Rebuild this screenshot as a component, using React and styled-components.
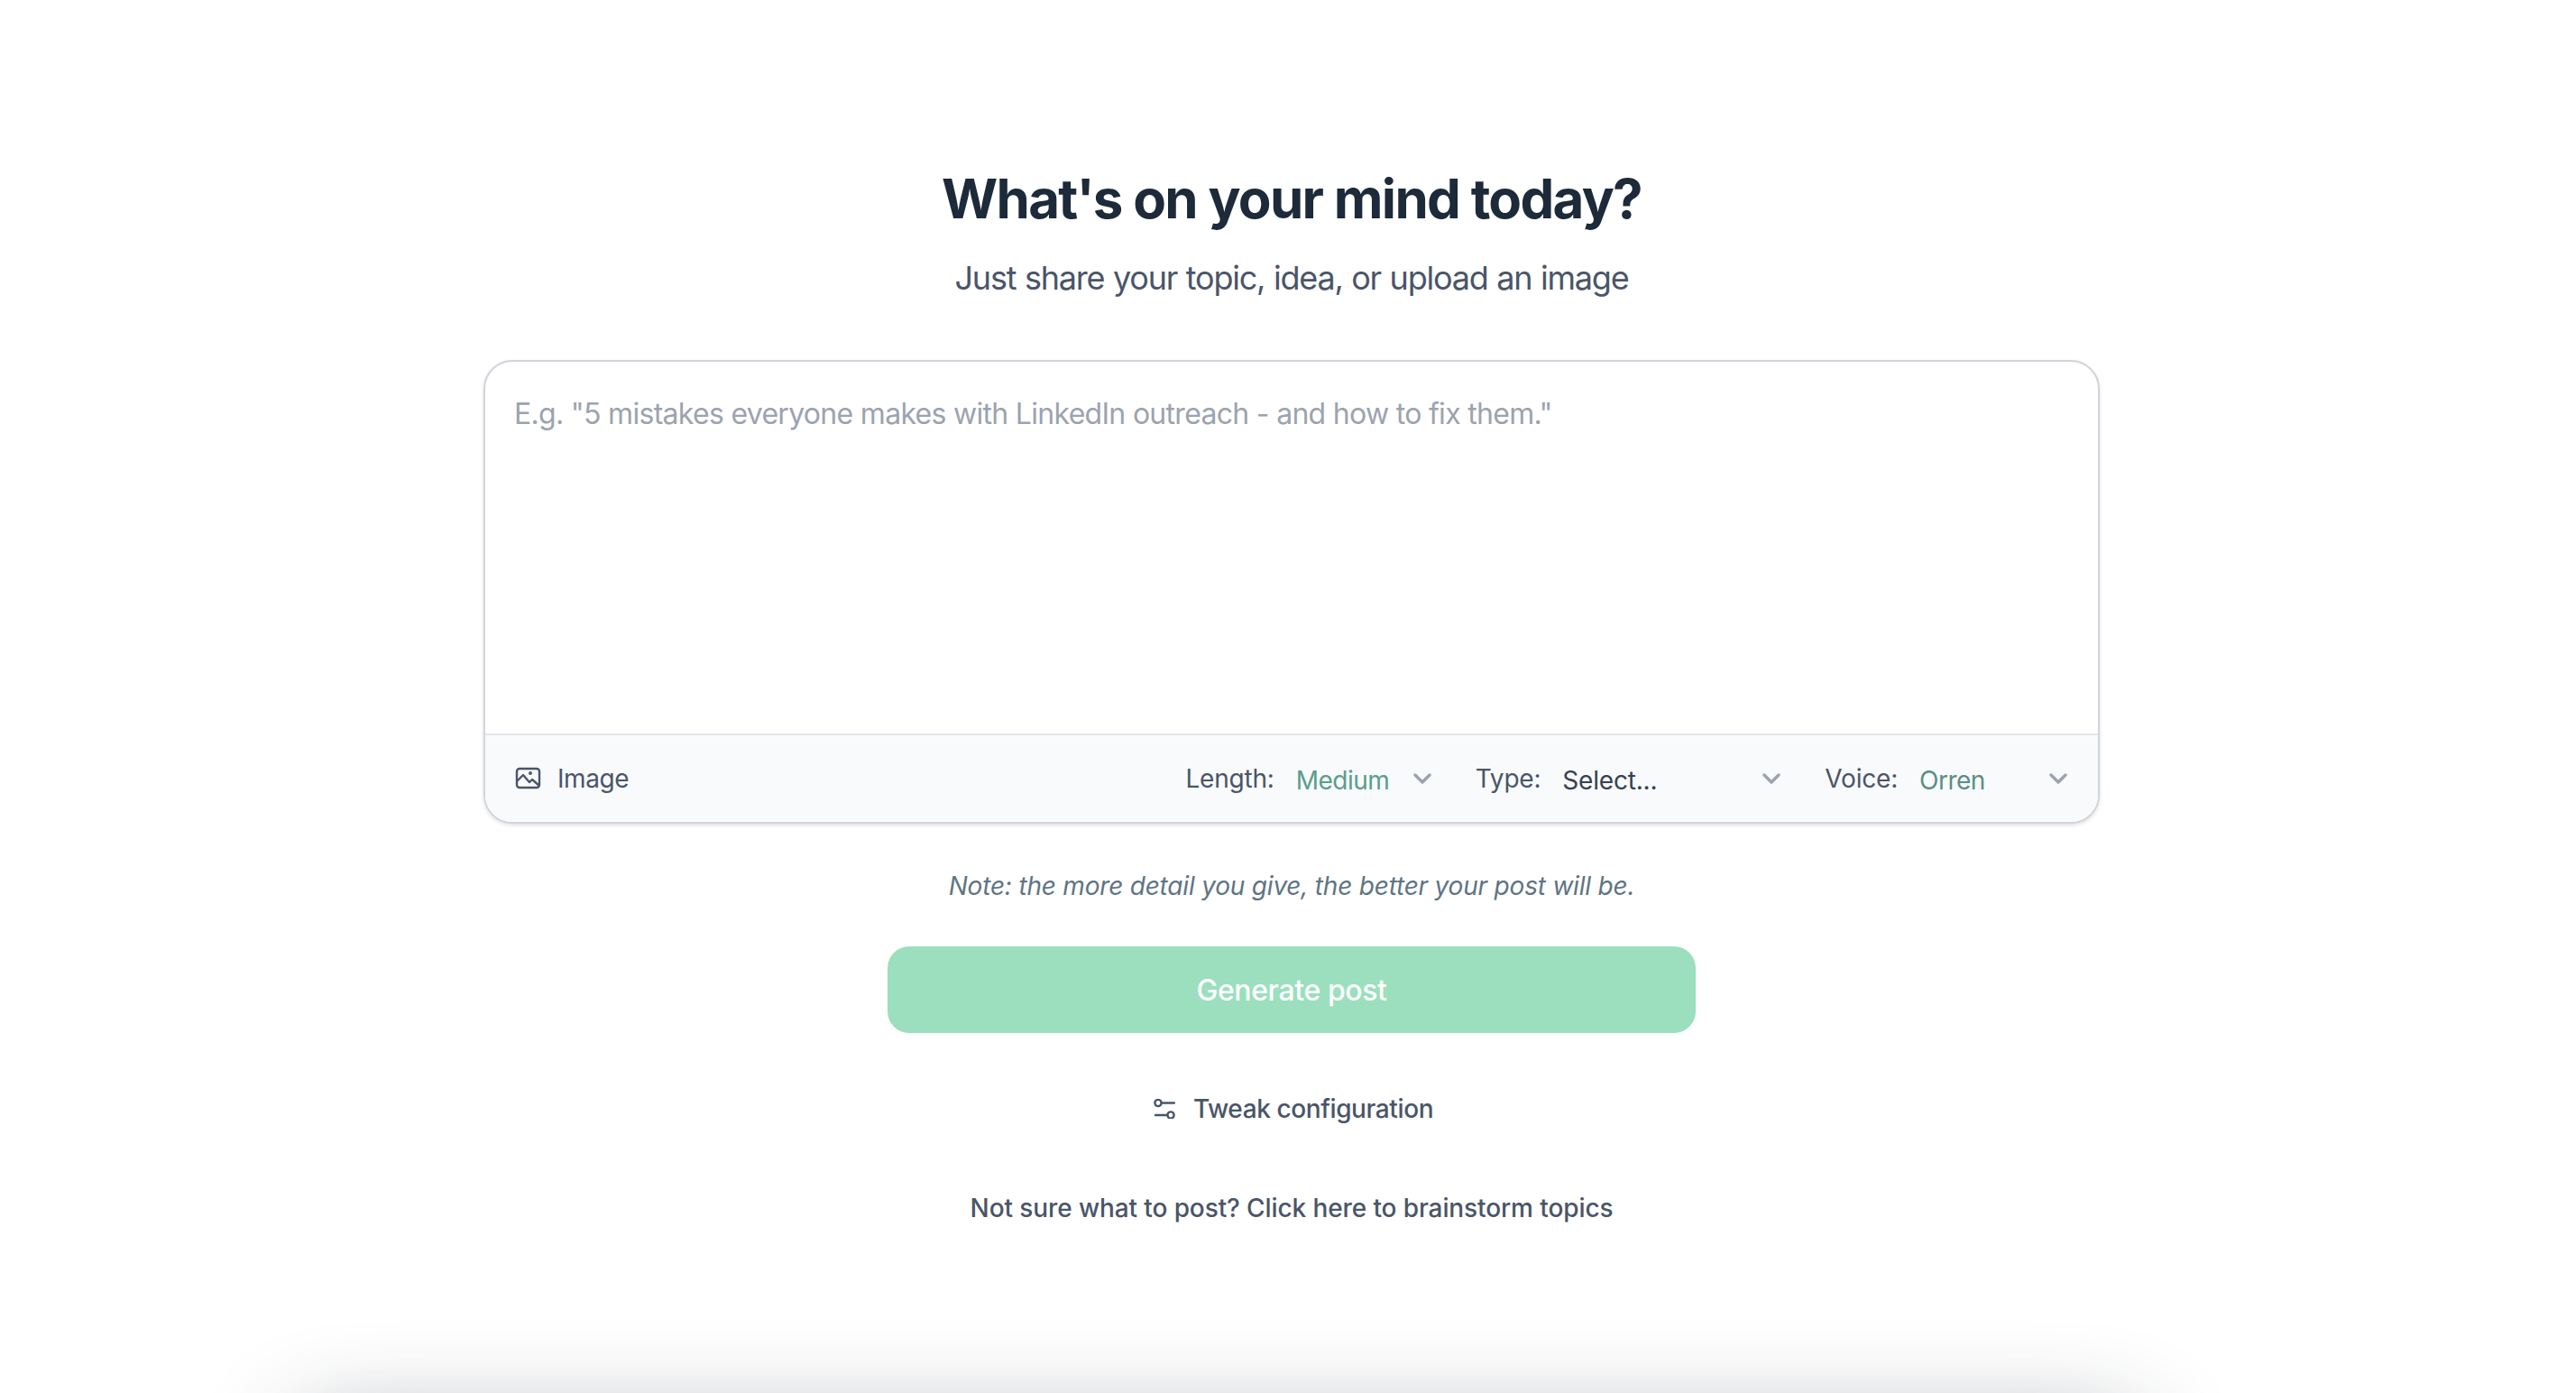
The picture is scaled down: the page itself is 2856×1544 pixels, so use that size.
import React from "react";
import styled, { createGlobalStyle } from "styled-components";

const GlobalStyle = createGlobalStyle`
  html, body {
    margin: 0;
    padding: 0;
    background: #ffffff;
    font-family: "Inter", "Liberation Sans", sans-serif;
  }
  * { box-sizing: border-box; }
`;

const Page = styled.main`
  height: 100vh;
  overflow: hidden;
  display: flex;
  flex-direction: column;
  align-items: center;
  padding: 184px 0 0 8px;
  background: #ffffff;
  & > * { flex: none; }
`;

const Title = styled.h1`
  margin: 0;
  font-size: 60px;
  line-height: 72px;
  font-weight: 700;
  letter-spacing: -1.7px;
  color: #1c2a39;
`;

const Subtitle = styled.p`
  margin: 24px 0 0;
  font-size: 36px;
  line-height: 56px;
  letter-spacing: -1.2px;
  word-spacing: 0.7px;
  color: #4a5568;
`;

const Composer = styled.section`
  width: 1792px;
  height: 514px;
  margin-top: 63px;
  display: flex;
  flex-direction: column;
  border: 2px solid #d1d5db;
  border-radius: 32px;
  background: #ffffff;
  box-shadow: 0 2px 4px rgba(0, 0, 0, 0.12);
  overflow: hidden;
`;

const Prompt = styled.textarea`
  flex: 1;
  width: 100%;
  padding: 34px 32px 32px;
  border: 0;
  outline: 0;
  resize: none;
  font: 400 32px/48px "Inter", sans-serif;
  letter-spacing: -0.7px;
  color: #1f2937;
  background: transparent;
  &::placeholder {
    color: #9ca3af;
    opacity: 1;
  }
`;

const Toolbar = styled.div`
  height: 98px;
  display: flex;
  align-items: center;
  padding: 0 34px 0 32px;
  background: #f8fafc;
  border-top: 2px solid #e5e7eb;
`;

const ImageButton = styled.button`
  display: flex;
  align-items: center;
  gap: 18px;
  padding: 0;
  border: 0;
  background: none;
  font: 400 28px/40px "Inter", sans-serif;
  letter-spacing: -0.4px;
  color: #4a5568;
  margin-right: auto;
`;

const Picker = styled.div`
  display: flex;
  align-items: center;
  margin-left: ${(p) => p.$gap}px;
`;

const PickerLabel = styled.span`
  font-size: 28px;
  line-height: 40px;
  letter-spacing: -0.2px;
  color: #4a5568;
`;

const PickerValue = styled.span`
  width: ${(p) => p.$width}px;
  margin-left: 24px;
  padding-top: 4px;
  font-size: 28px;
  line-height: 40px;
  letter-spacing: ${(p) => p.$tracking}px;
  color: ${(p) => p.$color};
`;

const Chevron = styled.svg`
  width: 20px;
  height: 14px;
  margin-bottom: 1px;
  fill: none;
  stroke: #9ca3af;
  stroke-width: 3.4;
  stroke-linecap: round;
  stroke-linejoin: round;
`;

const Note = styled.p`
  margin: 49px 0 0;
  font-size: 28px;
  line-height: 40px;
  font-style: italic;
  letter-spacing: -0.2px;
  color: #5f7482;
`;

const GenerateButton = styled.button`
  width: 896px;
  height: 96px;
  margin-top: 47px;
  padding: 2px 0 0;
  border: 0;
  border-radius: 24px;
  background: #9bdfbe;
  color: #ffffff;
  font: 500 32px/48px "Inter", sans-serif;
  letter-spacing: -0.4px;
`;

const TweakLink = styled.button`
  display: flex;
  align-items: center;
  gap: 20px;
  margin-top: 64px;
  padding: 0 0 0 4px;
  border: 0;
  background: none;
  font: 500 28px/40px "Inter", sans-serif;
  letter-spacing: -0.4px;
  color: #4a5568;
`;

const Brainstorm = styled.a`
  margin-top: 70px;
  font-size: 28px;
  line-height: 40px;
  font-weight: 500;
  letter-spacing: -0.1px;
  color: #4a5568;
`;

// next section of the page sits just under the fold, only its shadow shows
const NextPanel = styled.div`
  width: 2040px;
  height: 200px;
  margin-top: 226px;
  border-radius: 32px;
  background: #ffffff;
  box-shadow: -82px 0 110px 0 rgba(31, 41, 55, 0.45);
`;

const ImageIcon = () => (
  <svg width="30" height="26" viewBox="0 0 30 26" fill="none" stroke="#4a5568" strokeWidth="2.4" strokeLinejoin="round">
    <rect x="3" y="2" width="25" height="21" rx="3" />
    <path d="M3 16l7-7 7 8 3-3 8 7" />
    <circle cx="18" cy="7" r="0.8" fill="#4a5568" />
  </svg>
);

const SlidersIcon = () => (
  <svg width="24" height="22" viewBox="0 0 24 22" fill="none" stroke="#4a5568" strokeWidth="2.4" strokeLinecap="round">
    <circle cx="5" cy="4.5" r="3.6" />
    <path d="M9 4.5h14M2 18h13" />
    <circle cx="19" cy="18" r="3.6" />
  </svg>
);

const ChevronIcon = () => (
  <Chevron viewBox="0 0 20 14">
    <path d="M2 3l8 8 8-8" />
  </Chevron>
);

export default function App() {
  return (
    <Page>
      <GlobalStyle />
      <Title>What's on your mind today?</Title>
      <Subtitle>Just share your topic, idea, or upload an image</Subtitle>

      <Composer>
        <Prompt placeholder={'E.g. "5 mistakes everyone makes with LinkedIn outreach - and how to fix them."'} />
        <Toolbar>
          <ImageButton>
            <ImageIcon />
            Image
          </ImageButton>
          <Picker $gap={0}>
            <PickerLabel>Length:</PickerLabel>
            <PickerValue $width={130} $tracking={-0.5} $color="#5b9e8a">Medium</PickerValue>
            <ChevronIcon />
          </Picker>
          <Picker $gap={49}>
            <PickerLabel>Type:</PickerLabel>
            <PickerValue $width={222} $tracking={-0.2} $color="#374151">Select...</PickerValue>
            <ChevronIcon />
          </Picker>
          <Picker $gap={49}>
            <PickerLabel>Voice:</PickerLabel>
            <PickerValue $width={144} $tracking={-0.5} $color="#5a8f82">Orren</PickerValue>
            <ChevronIcon />
          </Picker>
        </Toolbar>
      </Composer>

      <Note>Note: the more detail you give, the better your post will be.</Note>
      <GenerateButton>Generate post</GenerateButton>
      <TweakLink>
        <SlidersIcon />
        Tweak configuration
      </TweakLink>
      <Brainstorm>Not sure what to post? Click here to brainstorm topics</Brainstorm>
      <NextPanel />
    </Page>
  );
}
